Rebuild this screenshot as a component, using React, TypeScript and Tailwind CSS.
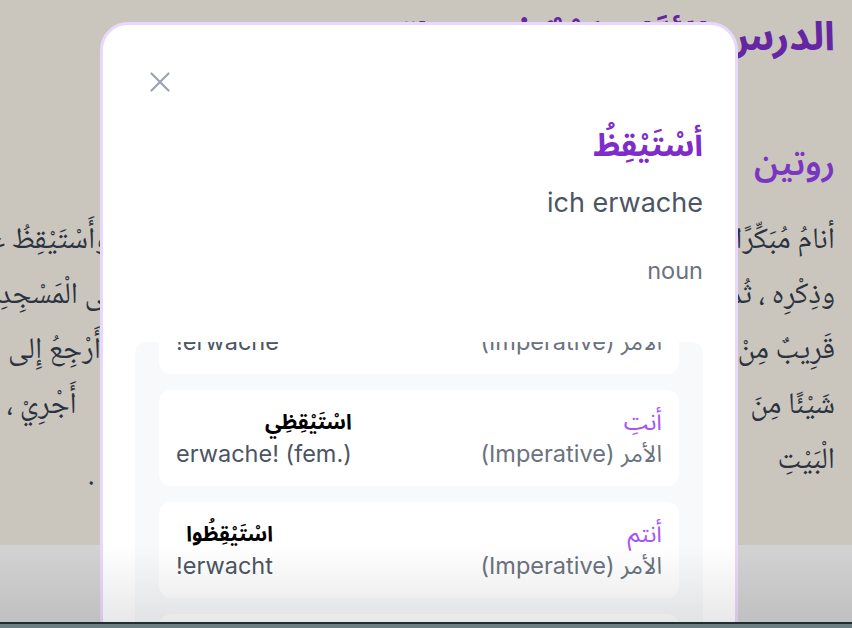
import React from "react";

const AR = "font-['Noto_Sans_Arabic','Noto_Naskh_Arabic','DejaVu_Sans',sans-serif]";
const NASKH = "font-['Noto_Naskh_Arabic','Noto_Sans_Arabic','DejaVu_Sans',serif]";
const LAT = "font-['Inter','Noto_Sans_Arabic','DejaVu_Sans',sans-serif]";

type Row = { p: string; tense: string; form: string; tr: string };

const rows: Row[] = [
  { p: "أنتَ", tense: "الأمر (Imperative)", form: "اسْتَيْقِظْ", tr: "erwache!" },
  { p: "أنتِ", tense: "الأمر (Imperative)", form: "اسْتَيْقِظِي", tr: "erwache! (fem.)" },
  { p: "أنتم", tense: "الأمر (Imperative)", form: "اسْتَيْقِظُوا", tr: "erwacht!" },
  { p: "أنتنّ", tense: "الأمر (Imperative)", form: "اسْتَيْقِظْنَ", tr: "erwacht! (fem.)" },
];

function Card({ r }: { r: Row }) {
  return (
    <div dir="rtl" className="flex h-[96px] shrink-0 items-start justify-between rounded-xl bg-white px-[17px] py-4">
      <div className="flex flex-col">
        <div className={`h-8 text-[24px] leading-8 text-[#a855f7] ${LAT}`}>{r.p}</div>
        <div className={`h-8 text-[23.5px] leading-8 text-[#6b7280] ${LAT}`}>{r.tense}</div>
      </div>
      <div className="flex flex-col">
        <div className={`h-8 text-[21px] font-bold leading-8 text-black ${AR}`}>{r.form}</div>
        <div className={`h-8 text-[23.5px] leading-8 text-[#4b5563] ${LAT}`}>{r.tr}</div>
      </div>
    </div>
  );
}

function Line({ right, left, ml }: { right: string; left: string; ml: string }) {
  return (
    <div dir="rtl" className="flex h-[55px] items-center justify-between whitespace-nowrap">
      <span>{right}</span>
      <span className={ml}>{left}</span>
    </div>
  );
}

export default function App() {
  return (
    <div className="flex h-[628px] w-[852px] flex-col overflow-hidden">
      <div className="relative flex flex-1 flex-col overflow-hidden bg-[#cbc6bd]">
        {/* page behind the dialog */}
        <div dir="rtl" className={`flex h-[545px] shrink-0 flex-col pr-[17px] ${AR}`}>
          <div className="mt-[10px] h-[56px] whitespace-nowrap text-[40px] font-bold leading-[56px] text-[#6526a3]">
            الدرس الأوَّل: يَوْمٌ فِي حَيَاتِي
          </div>
          <div className="mt-[74px] h-[48px] text-[34px] font-semibold leading-[48px] text-[#7a36c2]">روتين</div>
          <div className={`mt-[26px] text-[30px] leading-[55px] text-[#2b3240] ${NASKH}`}>
            <Line right="أنامُ مُبَكِّرًا" left="وأَسْتَيْقِظُ عَلَى" ml="-ml-[38px]" />
            <Line right="وذِكْرِه ، ثُمَّ" left="أذْهَبُ إلى الْمَسْجِدِ" ml="-ml-[2px]" />
            <Line right="قَرِيبٌ مِنْ" left="أَرْجِعُ إِلى" ml="ml-[8px]" />
            <Line right="شَيْئًا مِنَ" left="أَجْرِيْ ، ثُمَّ" ml="-ml-[26px]" />
            <div className="flex h-[55px] items-center justify-between whitespace-nowrap">
              <span>الْبَيْتِ</span>
              <span className="ml-[88px] mt-[30px]">.</span>
            </div>
          </div>
        </div>
        <div className="flex-1 bg-[#d3d3d3]" />

        {/* dialog */}
        <div className="absolute left-[100px] top-[22px] h-[640px] w-[638px] rounded-t-[28px] border-[3px] border-[#e9d8fd] bg-white">
          <div className="flex flex-col px-8 pt-[47px]">
            <svg className="ml-[15px] block h-[20px] w-[20px]" viewBox="0 0 20 20" fill="none" stroke="#9ca3af" strokeWidth="2.2" strokeLinecap="round">
              <path d="M1.5 1.5L18.5 18.5M18.5 1.5L1.5 18.5" />
            </svg>
            <div dir="rtl" className={`mt-[32px] h-[44px] text-[32px] font-bold leading-[44px] text-[#7e2ccb] ${AR}`}>
              أسْتَيْقِظُ
            </div>
            <div className={`mt-[17px] h-9 text-right text-[27px] leading-9 text-[#4b5563] ${LAT}`}>ich erwache</div>
            <div className={`mt-[35px] h-[30px] text-right text-[23.5px] leading-[30px] text-[#6b7280] ${LAT}`}>noun</div>
            <div className="mt-[56px] h-[320px] overflow-hidden rounded-t-xl bg-[#f8f9fa] px-6">
              <div className="-mt-[64px] flex flex-col gap-4">
                {rows.map((r, i) => (
                  <Card key={i} r={r} />
                ))}
              </div>
            </div>
          </div>
        </div>

        {/* bottom fade */}
        <div className="pointer-events-none absolute bottom-0 left-0 right-0 h-[77px] bg-linear-to-b from-[rgba(0,0,0,0)] to-[rgba(0,0,0,0.09)]" />
      </div>
      <div className="h-[2px] shrink-0 bg-[#222c2f]" />
      <div className="h-[4px] shrink-0 bg-[#6c7e82]" />
    </div>
  );
}
